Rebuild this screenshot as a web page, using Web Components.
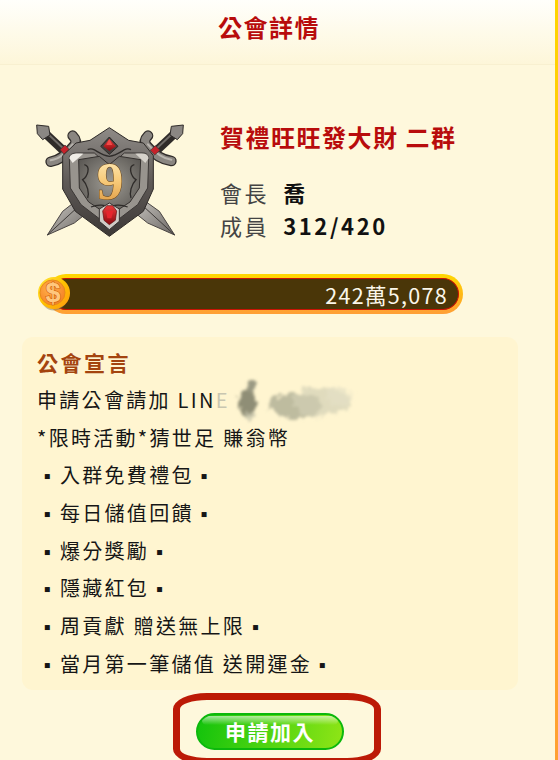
<!DOCTYPE html>
<html lang="zh-Hant">
<head>
<meta charset="utf-8">
<title>公會詳情</title>
<style>
html,body{margin:0;padding:0;height:760px;overflow:hidden;background:#fef8dc;}
body{font-family:"Noto Sans CJK TC","Noto Sans",sans-serif;}
i{font-style:normal;font-family:"Liberation Sans",sans-serif;}
</style>
</head>
<body>
<guild-page>
  <guild-header>公會詳情</guild-header>
  <guild-summary name="賀禮旺旺發大財 二群" leader="喬" members="312/420"></guild-summary>
  <gold-bar>242萬5,078</gold-bar>
  <guild-notice heading="公會宣言">
    <notice-line>申請公會請加 LIN<span style="color:#c9c6b0">E</span><line-smudge></line-smudge></notice-line>
    <notice-line>*限時活動*猜世足 賺翁幣</notice-line>
    <notice-line> <i>▪</i> 入群免費禮包 <i>▪</i></notice-line>
    <notice-line> <i>▪</i> 每日儲值回饋 <i>▪</i></notice-line>
    <notice-line> <i>▪</i> 爆分獎勵 <i>▪</i></notice-line>
    <notice-line> <i>▪</i> 隱藏紅包 <i>▪</i></notice-line>
    <notice-line> <i>▪</i> 周貢獻 贈送無上限 <i>▪</i></notice-line>
    <notice-line> <i>▪</i> 當月第一筆儲值 送開運金 <i>▪</i></notice-line>
  </guild-notice>
  <join-button>申請加入</join-button>
</guild-page>

<script>
class GuildPage extends HTMLElement {
  constructor() {
    super();
    this.attachShadow({ mode: "open" }).innerHTML = `<style>
      :host{display:block;box-sizing:border-box;width:558px;height:760px;overflow:hidden;padding-right:3px;
        background:linear-gradient(#ffd500,#ffa033) right top/3px 100% no-repeat #fef8dc;}
    </style><slot></slot>`;
  }
}

class GuildHeader extends HTMLElement {
  constructor() {
    super();
    this.attachShadow({ mode: "open" }).innerHTML = `<style>
      :host{display:flex;align-items:center;justify-content:center;box-sizing:border-box;height:65px;
        border-bottom:1px solid #f8f0d0;background:linear-gradient(#fffffb,#fdf6d9);
        color:#b80c0c;font-size:24px;font-weight:700;letter-spacing:1.5px;padding:0 17px 12px 0;}
    </style><slot></slot>`;
  }
}

class GuildEmblem extends HTMLElement {
  constructor() {
    super();
    this.attachShadow({ mode: "open" }).innerHTML = `<style>
      :host{display:block;width:150px;height:115px;flex:none;}
      svg{display:block;}
    </style>
    <svg width="150" height="115" viewBox="50 40 450 345">
      <defs>
        <linearGradient id="blade" x1="0" y1="0" x2="1" y2="1"><stop offset="0" stop-color="#cfccc6"/><stop offset="1" stop-color="#6a6663"/></linearGradient>
        <linearGradient id="rim" x1="0" y1="0" x2="0" y2="1"><stop offset="0" stop-color="#8f8b87"/><stop offset=".5" stop-color="#5f5a57"/><stop offset="1" stop-color="#3c3836"/></linearGradient>
        <radialGradient id="plate" cx=".5" cy=".45" r=".62"><stop offset="0" stop-color="#9f9c94"/><stop offset="1" stop-color="#5a5753"/></radialGradient>
        <linearGradient id="gold" x1="0" y1="0" x2="0" y2="1"><stop offset="0" stop-color="#fff3c8"/><stop offset=".5" stop-color="#f8cb7a"/><stop offset="1" stop-color="#d88f36"/></linearGradient>
        <linearGradient id="ruby" x1="0" y1="0" x2="0" y2="1"><stop offset="0" stop-color="#ee3a3a"/><stop offset="1" stop-color="#8c0a10"/></linearGradient>
      </defs>
      <!-- lower blades -->
      <path d="M360 262 L420 305 L466 376 L385 340 L335 300Z" fill="url(#blade)" stroke="#4a4543" stroke-width="3"/>
      <path d="M370 288 L466 376" stroke="#3f3b39" stroke-width="3"/>
      <path d="M185 262 L130 305 L84 376 L165 340 L215 300Z" fill="url(#blade)" stroke="#4a4543" stroke-width="3"/>
      <path d="M180 288 L84 376" stroke="#3f3b39" stroke-width="3"/>
      <!-- left hilt -->
      <path d="M72 66 L142 132" stroke="#2f2b29" stroke-width="26"/>
      <path d="M74 62 L140 124" stroke="#6f6b67" stroke-width="6"/>
      <path d="M52 46 L88 50 L92 76 L70 90 L54 72Z" fill="#8b8783" stroke="#302c2a" stroke-width="3"/>
      <path d="M94 156 C124 152 146 130 164 108 C172 98 170 88 160 78" fill="none" stroke="#322e2c" stroke-width="32" stroke-linecap="round"/>
      <path d="M94 156 C124 152 146 130 164 108 C172 98 170 88 160 78" fill="none" stroke="#8a8681" stroke-width="24" stroke-linecap="round"/>
      <path d="M94 152 C124 148 142 126 160 104" fill="none" stroke="#b9b5af" stroke-width="6" stroke-linecap="round"/>
      <path d="M122 120 L137 106 L152 122 L136 136Z" fill="#c5222a" stroke="#3a3634" stroke-width="2"/>
      <!-- right hilt -->
      <path d="M472 66 L402 132" stroke="#2f2b29" stroke-width="26"/>
      <path d="M470 62 L404 124" stroke="#6f6b67" stroke-width="6"/>
      <path d="M492 46 L456 50 L452 76 L474 90 L490 72Z" fill="#8b8783" stroke="#302c2a" stroke-width="3"/>
      <path d="M456 154 C424 150 400 130 382 108 C374 98 376 88 386 78" fill="none" stroke="#322e2c" stroke-width="32" stroke-linecap="round"/>
      <path d="M456 154 C424 150 400 130 382 108 C374 98 376 88 386 78" fill="none" stroke="#8a8681" stroke-width="24" stroke-linecap="round"/>
      <path d="M456 150 C424 146 404 126 386 104" fill="none" stroke="#b9b5af" stroke-width="6" stroke-linecap="round"/>
      <path d="M393 122 L408 108 L422 122 L406 136Z" fill="#c5222a" stroke="#3a3634" stroke-width="2"/>
      <!-- shield -->
      <path d="M270 54 L328 92 L372 100 L402 138 L402 238 L372 305 L270 380 L168 305 L130 238 L130 138 L170 100 L212 92Z" fill="url(#rim)" stroke="#2e2a28" stroke-width="3"/>
      <path d="M150 145 C150 135 160 130 172 130 L225 130 L270 170 L315 130 L372 130 C382 130 388 138 388 148 L385 235 L355 285 L270 350 L185 285 L153 235Z" fill="#98948e" stroke="#3b3735" stroke-width="3"/>
      <path d="M178 150 L240 140 L270 165 L300 140 L364 150 L360 235 L332 277 L270 318 L208 277 L180 235Z" fill="url(#plate)" stroke="#34302e" stroke-width="3"/>
      <path d="M150 146 C152 133 165 130 192 132 L160 160Z" fill="#efece6"/>
      <path d="M388 146 C386 133 375 130 348 132 L378 160Z" fill="#d6d2cb"/>
      <g fill="none" stroke="#2f2c2a" stroke-width="4">
        <path d="M205 120 C225 110 235 135 270 140 C305 135 315 110 335 120"/>
        <path d="M195 165 C215 170 205 200 190 210 C205 225 210 250 205 265"/>
        <path d="M345 165 C325 170 335 200 350 210 C335 225 330 250 335 265"/>
        <path d="M215 292 C240 282 255 287 270 292 C285 287 300 282 325 292"/>
      </g>
      <!-- top gem -->
      <path d="M270 82 L296 110 L270 134 L244 110Z" fill="#44403e" stroke="#2e2a28" stroke-width="3"/>
      <path d="M270 88 L290 110 L270 124 L252 110Z" fill="url(#ruby)"/>
      <path d="M270 88 L279 106 L261 106Z" fill="#f04a48"/>
      <!-- bottom gem -->
      <path d="M270 280 L300 298 L300 335 L270 360 L240 335 L240 298Z" fill="#cfccc6" stroke="#35312f" stroke-width="3"/>
      <path d="M262 288 L280 288 L292 304 L288 332 L270 345 L254 332 L250 304Z" fill="url(#ruby)" stroke="#5d0a0e" stroke-width="2"/>
      <path d="M260 304 L282 304 L276 326 L264 326Z" fill="#e6252d"/>
      <text x="272" y="267" text-anchor="middle" font-family="Liberation Serif" font-weight="700" font-size="160" fill="url(#gold)" stroke="#6b4415" stroke-width="3" paint-order="stroke">9</text>
    </svg>`;
  }
}

class GuildSummary extends HTMLElement {
  constructor() {
    super();
    this.attachShadow({ mode: "open" }).innerHTML = `<style>
      :host{display:flex;align-items:flex-start;gap:34px;padding:58px 0 0 36px;height:208px;box-sizing:border-box;}
      .name{color:#b80c0c;font-size:24px;font-weight:700;letter-spacing:1.5px;line-height:28px;white-space:nowrap;}
      .rows{margin-top:25px;display:grid;grid-template-columns:max-content 1fr;column-gap:14px;
        font-size:22px;line-height:33px;letter-spacing:2.6px;}
      .k{color:#444;font-weight:400;}
      .v{color:#111;font-weight:700;}
    </style>
    <guild-emblem></guild-emblem>
    <div>
      <div class="name">${this.getAttribute("name")}</div>
      <div class="rows">
        <span class="k">會長</span><span class="v">${this.getAttribute("leader")}</span>
        <span class="k">成員</span><span class="v">${this.getAttribute("members")}</span>
      </div>
    </div>`;
  }
}

class GoldBar extends HTMLElement {
  constructor() {
    super();
    this.attachShadow({ mode: "open" }).innerHTML = `<style>
      :host{display:block;position:relative;margin:1px 0 0 38px;width:425px;height:40px;}
      .track{margin-left:8px;height:40px;box-sizing:border-box;padding:4px;border-radius:20px;
        background:linear-gradient(#ffd800,#ffb319 60%,#ff9f38);}
      .fill{display:flex;align-items:center;justify-content:flex-end;height:100%;box-sizing:border-box;
        border:1.5px solid #c81404;border-left:0;border-radius:16px;background:#4a3608;
        padding-right:10px;color:#fbf7ea;font-size:21.5px;letter-spacing:1.3px;}
      svg{position:absolute;left:0;top:2px;}
    </style>
    <div class="track"><div class="fill"><slot></slot></div></div>
    <svg width="32" height="37" viewBox="0 0 32 37">
      <defs>
        <linearGradient id="r" x1="0" y1="0" x2="1" y2="1"><stop offset="0" stop-color="#ffe93c"/><stop offset=".5" stop-color="#ffc000"/><stop offset="1" stop-color="#ff9a10"/></linearGradient>
        <radialGradient id="f" cx=".4" cy=".35" r=".8"><stop offset="0" stop-color="#ffb24c"/><stop offset="1" stop-color="#f4791e"/></radialGradient>
      </defs>
      <ellipse cx="16" cy="19" rx="14" ry="15.5" fill="#8a7a5c" opacity=".5"/>
      <circle cx="16" cy="17" r="16" fill="url(#r)"/>
      <circle cx="14.5" cy="16.5" r="12.5" fill="url(#f)" stroke="#e88a1a"/>
      <text x="15" y="26" text-anchor="middle" font-family="Liberation Sans" font-weight="700" font-size="27" fill="#ffc77e" stroke="#d0600e" stroke-width="1.2" paint-order="stroke">$</text>
    </svg>`;
  }
}

class GuildNotice extends HTMLElement {
  constructor() {
    super();
    this.attachShadow({ mode: "open" }).innerHTML = `<style>
      :host{display:block;box-sizing:border-box;margin:23px 0 0 22px;width:496px;height:353px;
        padding:6px 15px 0;border-radius:11px;background:#fff5d0;}
      h2{margin:0;color:#a4440e;font-size:21px;font-weight:700;letter-spacing:2.5px;line-height:38px;}
    </style>
    <h2>${this.getAttribute("heading")}</h2>
    <slot></slot>`;
  }
}

class NoticeLine extends HTMLElement {
  constructor() {
    super();
    this.attachShadow({ mode: "open" }).innerHTML = `<style>
      :host{display:block;position:relative;height:37.7px;line-height:37.7px;white-space:pre;
        font-size:20px;letter-spacing:2.3px;color:#161616;}
    </style><slot></slot>`;
  }
}

class LineSmudge extends HTMLElement {
  constructor() {
    super();
    // white-space: pre comes down from notice-line, reset it or the template's newlines take up lines
    this.attachShadow({ mode: "open" }).innerHTML = `<style>
      :host{position:absolute;left:190px;top:-14px;width:140px;height:62px;white-space:normal;}
      svg{display:block;}
    </style>
    <svg width="140" height="62" viewBox="0 0 140 62">
      <defs>
        <filter id="ink" x="-20%" y="-20%" width="140%" height="140%">
          <feTurbulence type="fractalNoise" baseFrequency=".12" numOctaves="4" seed="7" result="n"/>
          <feDisplacementMap in="SourceGraphic" in2="n" scale="14" xChannelSelector="R" yChannelSelector="G"/>
          <feGaussianBlur stdDeviation="1.5"/>
        </filter>
      </defs>
      <g filter="url(#ink)">
        <ellipse cx="20" cy="35" rx="9" ry="14" fill="#8f8e76"/>
        <ellipse cx="24" cy="20" rx="3" ry="6" fill="#9a9982"/>
        <ellipse cx="24" cy="49" rx="6" ry="5" fill="#c2c0a8" opacity=".7"/>
        <ellipse cx="68" cy="39" rx="27" ry="12" fill="#b3b197" opacity=".85"/>
        <ellipse cx="94" cy="35" rx="28" ry="14" fill="#d3d0b5" opacity=".7"/>
        <ellipse cx="112" cy="29" rx="14" ry="9" fill="#e4e0c5" opacity=".7"/>
      </g>
    </svg>`;
  }
}

class JoinButton extends HTMLElement {
  constructor() {
    super();
    this.attachShadow({ mode: "open" }).innerHTML = `<style>
      :host{display:block;position:relative;margin:23px 0 0 196px;width:148px;height:37px;}
      button{display:block;position:relative;overflow:hidden;width:148px;height:37px;padding:0;box-sizing:border-box;
        border:2px solid #0cb80c;border-radius:19px;cursor:pointer;
        background:linear-gradient(100deg,#13c30c,#8fe516);
        color:#fff;font:700 21px/31px "Noto Sans CJK TC",sans-serif;letter-spacing:1.5px;}
      button::before{content:"";position:absolute;left:4px;right:4px;top:1px;height:9px;border-radius:9px;
        background:linear-gradient(rgba(255,255,255,.6),rgba(255,255,255,0));}
      button span{position:relative;}
      .mark{position:absolute;left:-23px;top:-20px;width:208px;height:72px;box-sizing:border-box;
        border:7px solid #bc1a06;border-radius:34px/16px;pointer-events:none;}
    </style>
    <button><span><slot></slot></span></button>
    <div class="mark"></div>`;
  }
}

customElements.define("guild-page", GuildPage);
customElements.define("guild-header", GuildHeader);
customElements.define("guild-emblem", GuildEmblem);
customElements.define("guild-summary", GuildSummary);
customElements.define("gold-bar", GoldBar);
customElements.define("guild-notice", GuildNotice);
customElements.define("notice-line", NoticeLine);
customElements.define("line-smudge", LineSmudge);
customElements.define("join-button", JoinButton);
</script>
</body>
</html>
